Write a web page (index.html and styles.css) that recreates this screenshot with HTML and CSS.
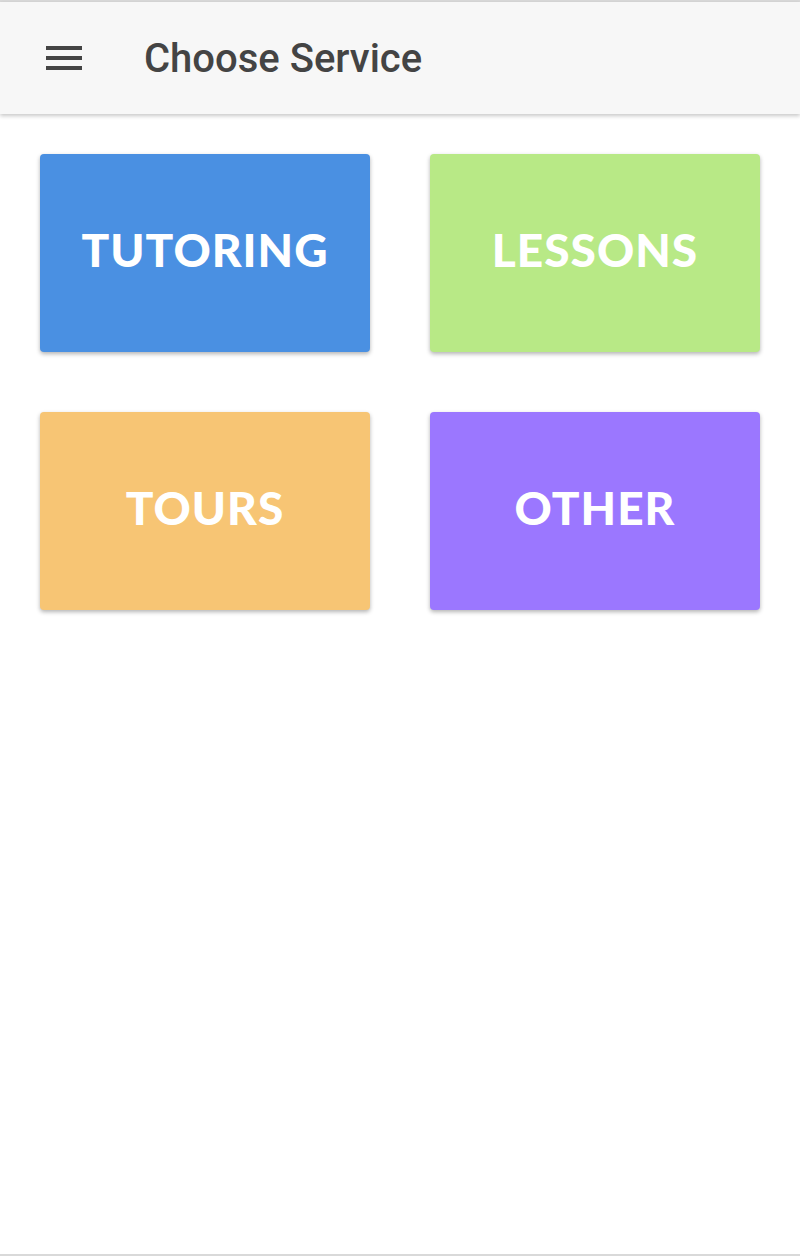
FILE: index.html
```html
<!DOCTYPE html>
<html>
<head>
<meta charset="utf-8">
<link rel="stylesheet" href="styles.css">
</head>
<body>
<div class="screen">
  <header class="appbar">
    <svg class="menu-icon" viewBox="0 0 24 24" width="48" height="48"><path d="M3 18h18v-2H3v2zm0-5h18v-2H3v2zm0-7v2h18V6H3z" fill="#444"/></svg>
    <h1 class="title">Choose Service</h1>
  </header>
  <main class="grid">
    <div class="card tutoring"><span>TUTORING</span></div>
    <div class="card lessons"><span>LESSONS</span></div>
    <div class="card tours"><span>TOURS</span></div>
    <div class="card other"><span>OTHER</span></div>
  </main>
</div>
</body>
</html>
```
FILE: styles.css
```css
html, body { margin: 0; padding: 0; background: #fff; }
.screen {
  height: 1256px;
  box-sizing: border-box;
  border-top: 2px solid #d9d9d9;
  border-bottom: 2px solid #d9d9d9;
  display: flex;
  flex-direction: column;
}
.appbar {
  height: 112px;
  background: #f7f7f7;
  box-shadow: 0 2px 4px rgba(0,0,0,0.22);
  display: flex;
  align-items: center;
  padding-left: 40px;
  position: relative;
  z-index: 1;
}
.menu-icon { display: block; margin-right: 56px; }
.title {
  margin: 0;
  font-family: Roboto, "Liberation Sans", sans-serif;
  font-weight: 500;
  font-size: 40px;
  color: #444;
  letter-spacing: 0;
}
.grid {
  display: grid;
  grid-template-columns: 330px 330px;
  grid-auto-rows: 198px;
  gap: 60px;
  padding: 40px;
}
.card {
  border-radius: 4px;
  box-shadow: 0 2px 4px rgba(0,0,0,0.3);
  display: flex;
  align-items: center;
  justify-content: center;
  padding-bottom: 8px;
  box-sizing: border-box;
}
.card span {
  font-family: Lato, "Open Sans", sans-serif;
  font-weight: 900;
  font-size: 46px;
  color: #fff;
  letter-spacing: 1px;
}
.tutoring { background: #4a90e2; }
.lessons { background: #b8e986; }
.tours { background: #f7c574; }
.other { background: #9b77ff; }
```
